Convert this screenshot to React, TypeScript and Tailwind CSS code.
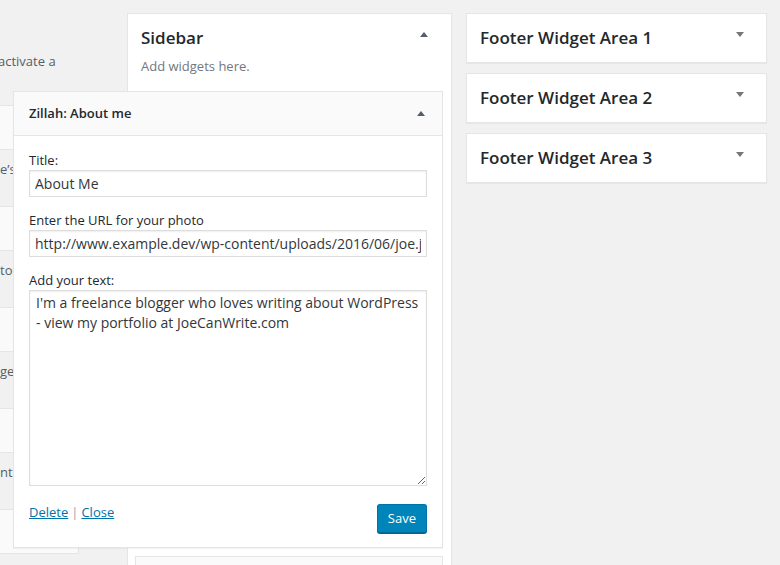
import React from "react";

const descPieces = ["e’s Posts.", "to your site.", "ge: Pages.", "nt | Recent"];

function ArrowUp({ className = "" }: { className?: string }) {
  return (
    <svg width="8" height="5" viewBox="0 0 8 5" className={className}>
      <polygon points="0,5 4,0 8,5" fill="currentColor" />
    </svg>
  );
}

function ArrowDown({ className = "" }: { className?: string }) {
  return (
    <svg width="8" height="5" viewBox="0 0 8 5" className={className}>
      <polygon points="0,0 8,0 4,5" fill="currentColor" />
    </svg>
  );
}

function AvailableColumn() {
  return (
    <div className="w-[79px] shrink-0 flex flex-col overflow-hidden">
      <p className="mt-[52px] -ml-[2px] h-[18px] leading-[18px] text-[13px] text-[#555d66] whitespace-nowrap">
        activate a
      </p>
      <div className="mt-[35px] flex flex-col">
        {descPieces.map((d, i) => (
          <div key={i} className="flex flex-col">
            <div className="h-[45px] bg-[#fafafa] border border-l-0 border-[#e5e5e5]" />
            <div className="h-[56px] pt-[10px]">
              {/* only the tail of each description peeks out from under the open widget */}
              <p className="w-[13px] overflow-hidden leading-[18px] text-[13px] text-[#555d66] whitespace-nowrap">{d}</p>
            </div>
          </div>
        ))}
        <div className="h-[45px] bg-[#fafafa] border border-l-0 border-[#e5e5e5]" />
      </div>
    </div>
  );
}

function Field({ label, children }: { label: string; children: React.ReactNode }) {
  return (
    <div className="flex flex-col">
      <label className="leading-[18px] text-[13px] text-[#23282d] mb-[1px]">{label}</label>
      {children}
    </div>
  );
}

function AboutWidget() {
  return (
    <div className="relative z-10 ml-[-122px] w-[430px] bg-white border border-[#e5e5e5] shadow-[0_1px_1px_rgba(0,0,0,0.04)]">
      <div className="h-[44px] bg-[#fafafa] border-b border-[#e5e5e5] flex items-center justify-between pl-[15px] pr-[17px]">
        <h3 className="text-[13px] font-semibold text-[#23282d]">Zillah: About me</h3>
        <ArrowUp className="text-[#555d66]" />
      </div>
      <div className="px-[15px] pt-[15px] pb-[14px] flex flex-col gap-[14px]">
        <Field label="Title:">
          <input
            readOnly
            defaultValue="About Me"
            className="h-[27px] w-full border border-[#ddd] shadow-[inset_0_1px_2px_rgba(0,0,0,0.07)] px-[5px] text-[14px] text-[#32373c] outline-none"
          />
        </Field>
        <Field label="Enter the URL for your photo">
          <input
            readOnly
            defaultValue="http://www.example.dev/wp-content/uploads/2016/06/joe.jpg"
            className="h-[27px] w-full border border-[#ddd] shadow-[inset_0_1px_2px_rgba(0,0,0,0.07)] px-[5px] text-[14px] text-[#32373c] outline-none"
          />
        </Field>
        <Field label="Add your text:">
          <textarea
            readOnly
            defaultValue={"I'm a freelance blogger who loves writing about WordPress\n- view my portfolio at JoeCanWrite.com"}
            className="h-[196px] w-full border border-[#ddd] shadow-[inset_0_1px_2px_rgba(0,0,0,0.07)] px-[6px] py-[2px] text-[14px] leading-[20px] text-[#32373c] outline-none resize"
          />
        </Field>
        <div className="flex items-start justify-between mt-[3px]">
          <div className="leading-[18px] text-[13px] text-[#0073aa] flex gap-[3px]">
            <a href="#" className="underline">Delete</a>
            <span className="text-[#a0a5aa]">|</span>
            <a href="#" className="underline">Close</a>
          </div>
          <button className="mt-[1px] h-[29px] px-[10px] rounded-[3px] bg-[#0085ba] border border-[#0073aa] border-b-[#006799] shadow-[0_1px_0_#006799] text-white text-[13px]">
            Save
          </button>
        </div>
      </div>
    </div>
  );
}

function SidebarColumn() {
  return (
    <div className="ml-[48px] mt-[13px] w-[325px] shrink-0 bg-white border border-[#e5e5e5] h-[600px]">
      <div className="pl-[13px] pr-[23px] pt-[12px]">
        <div className="flex items-start justify-between">
          <h2 className="text-[17px] leading-[24px] text-[#23282d] font-semibold">Sidebar</h2>
          <ArrowUp className="mt-[6px] text-[#555d66]" />
        </div>
        <p className="mt-[7px] leading-[18px] text-[13px] text-[#72777c]">Add widgets here.</p>
      </div>
      <div className="mt-[16px] pl-[7px] pr-[8px] flex flex-col gap-[8px]">
        <AboutWidget />
        <div className="h-[45px] bg-[#fafafa] border border-[#e5e5e5]" />
      </div>
    </div>
  );
}

function FooterColumn() {
  const areas = ["Footer Widget Area 1", "Footer Widget Area 2", "Footer Widget Area 3"];
  return (
    <div className="ml-[14px] mt-[13px] w-[301px] shrink-0 flex flex-col gap-[10px]">
      {areas.map((a) => (
        <div
          key={a}
          className="h-[50px] bg-white border border-[#e5e5e5] shadow-[0_1px_1px_rgba(0,0,0,0.04)] flex items-start justify-between pl-[13px] pr-[22px] pt-[12px]"
        >
          <h2 className="text-[17px] leading-[24px] text-[#23282d] font-semibold">{a}</h2>
          <ArrowDown className="mt-[6px] text-[#72777c]" />
        </div>
      ))}
    </div>
  );
}

export default function App() {
  return (
    <div className="w-[780px] h-[565px] overflow-hidden bg-[#f1f1f1] flex items-start font-['Open_Sans',sans-serif]">
      <AvailableColumn />
      <SidebarColumn />
      <FooterColumn />
    </div>
  );
}
